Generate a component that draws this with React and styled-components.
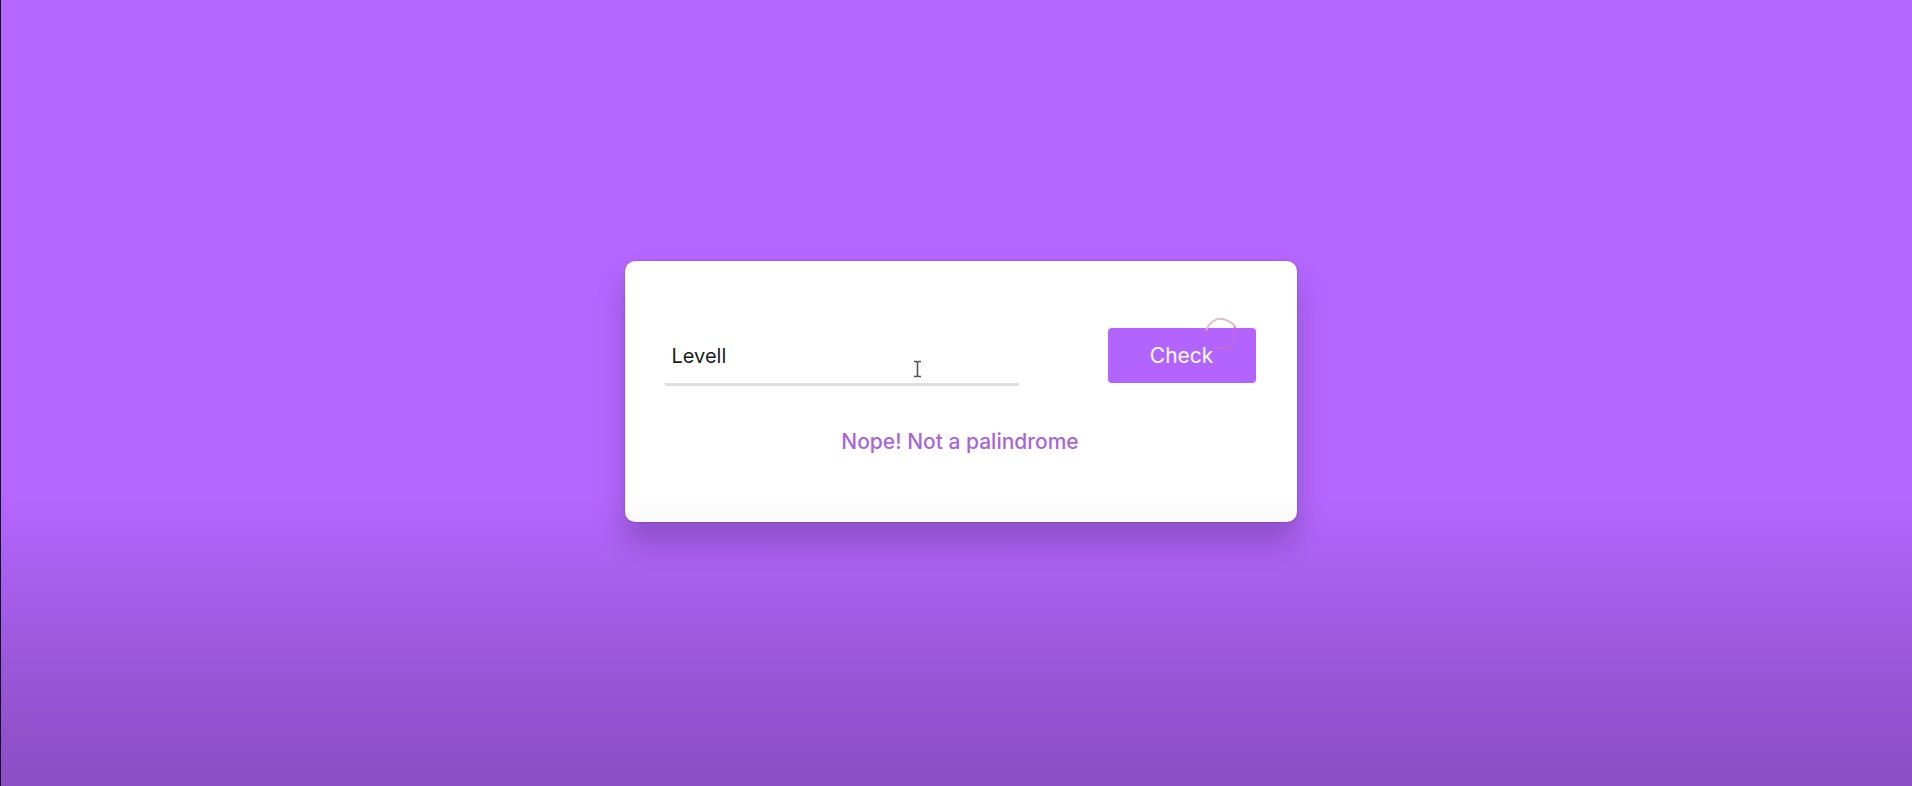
import React, { useState } from "react";
import styled, { createGlobalStyle } from "styled-components";

const GlobalStyle = createGlobalStyle`
  *, *::before, *::after { box-sizing: border-box; }
  body {
    margin: 0;
    background: #b566ff;
    font-family: Inter, "DM Sans", "Liberation Sans", sans-serif;
  }
`;

const Page = styled.main`
  position: relative;
  display: flex;
  align-items: center;
  justify-content: center;
  min-height: 100vh;
  padding: 0 0 3px 8px;
  border-left: 1px solid #12002e;
  background: #b566ff;
`;

const Shade = styled.div`
  position: absolute;
  inset: 0;
  pointer-events: none;
  background: linear-gradient(
    rgba(0, 0, 0, 0) 63%,
    rgba(0, 0, 0, 0.07) 73%,
    rgba(0, 0, 0, 0.19) 91%,
    rgba(0, 0, 0, 0.23) 100%
  );
`;

const Card = styled.form`
  position: relative;
  width: 100%;
  max-width: 672px;
  padding: 67px 41px 67px 40px;
  border-radius: 10px;
  background: #fff;
  box-shadow: 0 20px 30px rgba(0, 0, 0, 0.2), 0 0 2px rgba(0, 0, 0, 0.3);
`;

const Row = styled.div`
  display: flex;
  align-items: flex-start;
  justify-content: space-between;
`;

const WordInput = styled.input`
  width: 60%;
  height: 58px;
  padding: 0 7px;
  border: 0;
  border-bottom: 3px solid #dedede;
  outline: 0;
  background: transparent;
  color: #1c1a1c;
  font: inherit;
  font-size: 20px;
`;

const CheckButton = styled.button`
  width: 25%;
  height: 55px;
  border: 0;
  border-radius: 4px;
  background: #b464fe;
  color: #fff;
  font: inherit;
  font-size: 21px;
`;

const Message = styled.p`
  margin: 42px 0 0;
  color: #a966d6;
  font-size: 21px;
  font-weight: 500;
  line-height: 27px;
  text-align: center;
`;

const Pointer = styled.svg`
  position: absolute;
  top: 99px;
  left: 288px;
`;

const Ripple = styled.svg`
  position: absolute;
  top: 56px;
  left: 578px;
  pointer-events: none;
`;

export default function App() {
  const [word, setWord] = useState("Levell");
  return (
    <>
      <GlobalStyle />
      <Page>
        <Card onSubmit={(event) => event.preventDefault()}>
          <Row>
            <WordInput
              type="text"
              aria-label="Word"
              value={word}
              onChange={(event) => setWord(event.target.value)}
            />
            <CheckButton type="submit">Check</CheckButton>
          </Row>
          <Message>Nope! Not a palindrome</Message>
          <Pointer width="9" height="18" viewBox="0 0 9 18" fill="none" stroke="#555" aria-hidden="true">
            <path d="M1 1.5h2.5l1 1 1-1H8M4.5 2.5v13M1 16.5h2.5l1-1 1 1H8" strokeWidth="1.6" />
          </Pointer>
          <Ripple width="36" height="38" viewBox="0 0 36 38" fill="none" aria-hidden="true">
            <path d="M3 14C6 5 13 1 20 2q7 2 12 7" stroke="#dcc0c6" strokeWidth="2" />
            <path d="M4 12v7M32 9v13q-3 7-9 9H11" stroke="#c46cc8" strokeWidth="2" opacity="0.75" />
          </Ripple>
        </Card>
        <Shade />
      </Page>
    </>
  );
}
